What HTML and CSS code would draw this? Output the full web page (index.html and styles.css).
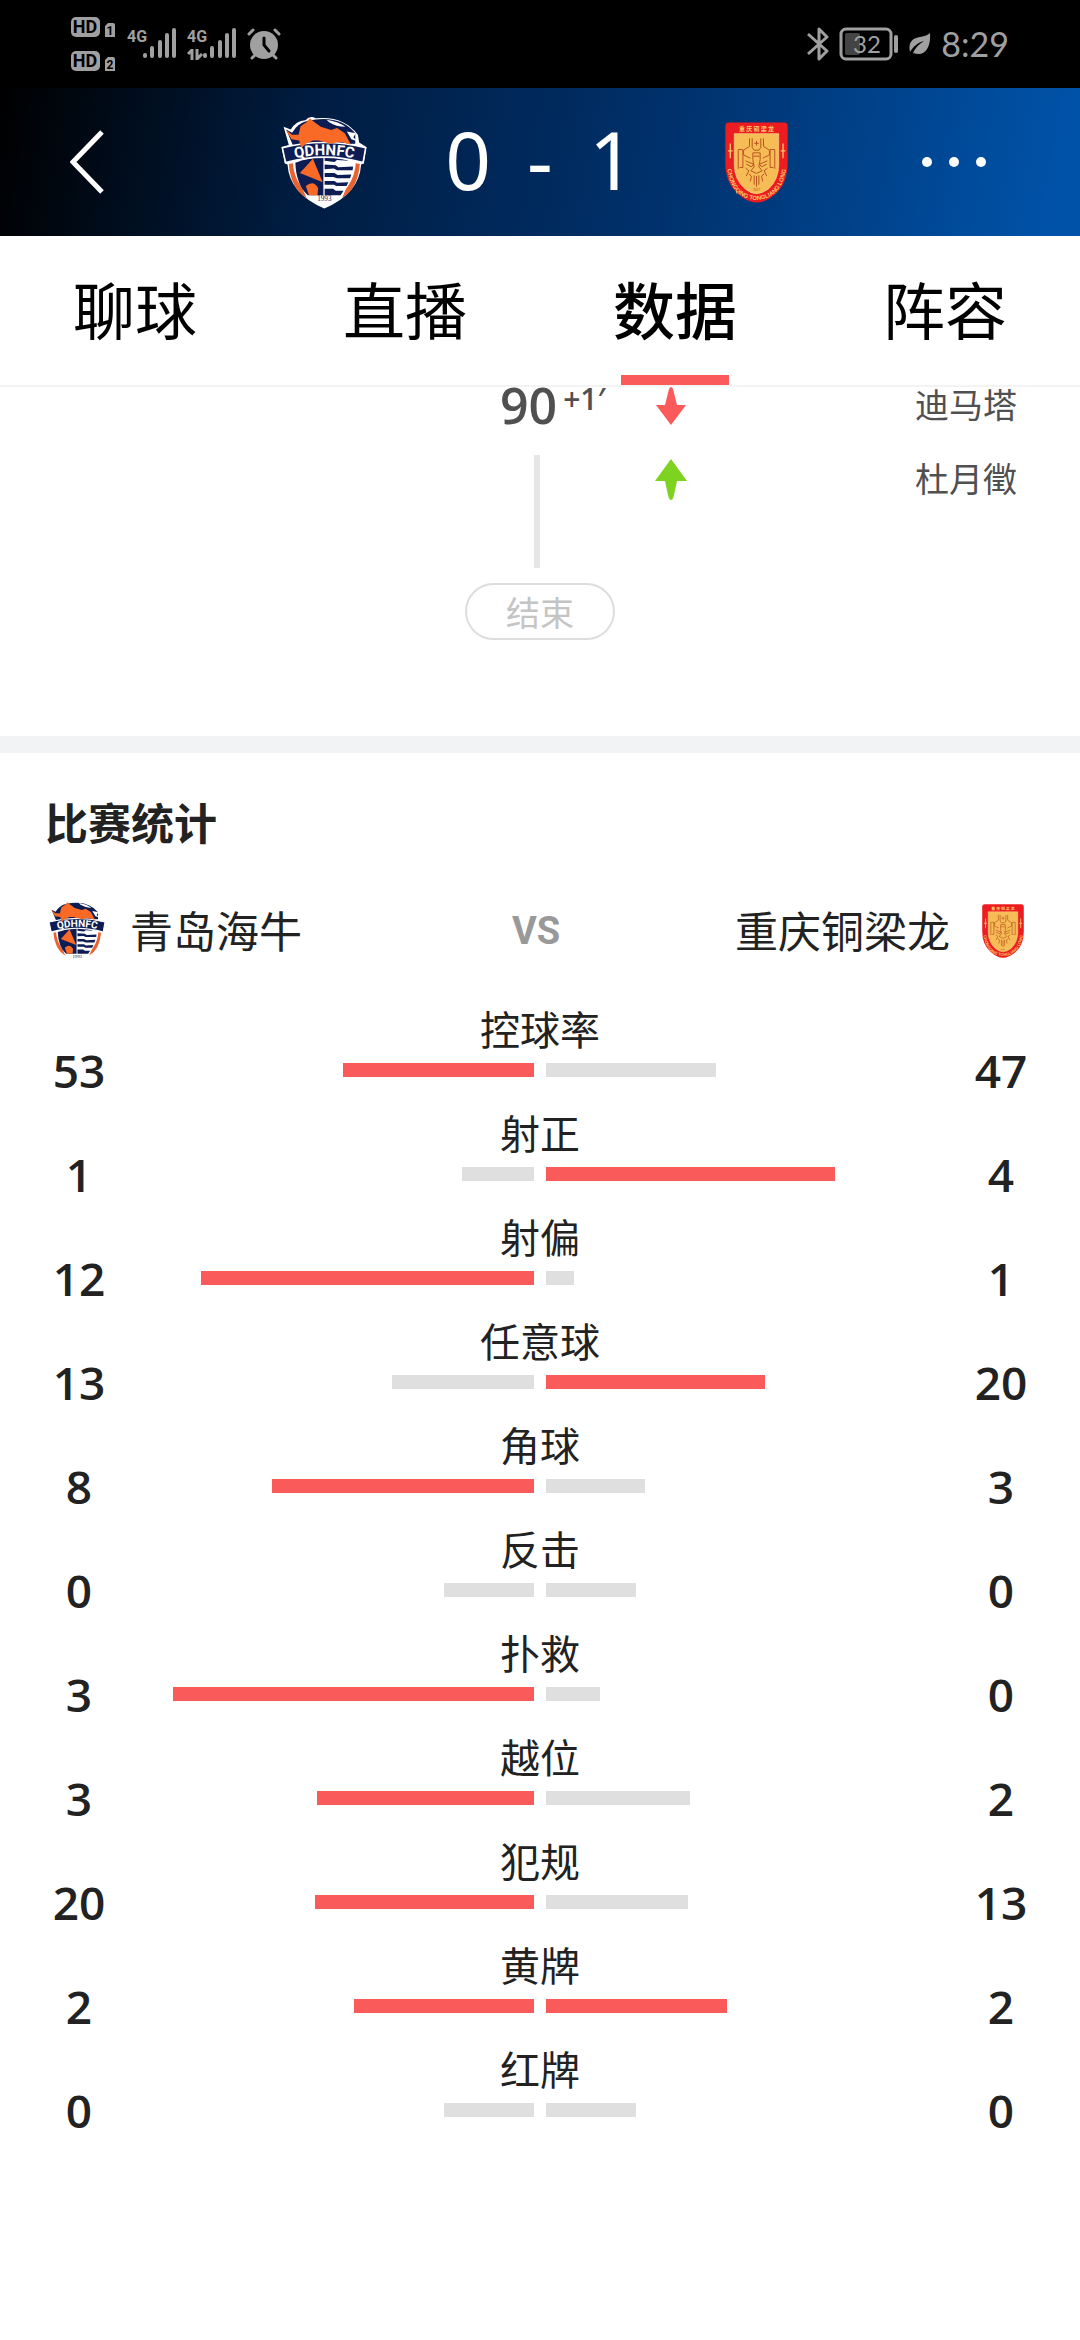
FILE: index.html
```html
<!DOCTYPE html>
<html lang="zh-CN">
<head>
    <meta charset="UTF-8">
    <meta name="viewport" content="width=device-width, initial-scale=1.0">
    <title>比赛数据</title>
    <link rel="stylesheet" href="styles.css">
</head>
<body>

<!-- club badges, reused below -->
<svg class="defs" aria-hidden="true">
    <symbol id="badge-qdhn" viewBox="60 44 264 288">
        <path d="M68 80 L90 88 Q106 62 135 60 Q150 44 166 54 Q250 44 296 104 L300 128 L322 142 L314 192 L306 196 Q300 286 193 331 Q86 286 80 196 L72 192 L62 142 L84 136 Z" fill="#fff"/>
        <path d="M76 88 L94 98 Q112 68 140 62 Q240 40 288 100 L288 132 L96 136 Z" fill="#0d1c52"/>
        <path d="M200 58 Q238 64 258 80 Q230 80 208 66 Z" fill="#fff"/>
        <path d="M262 94 L290 100 L282 112 L294 124 L276 118 Z" fill="#fff"/>
        <path d="M84 194 Q90 270 138 298 L118 250 L104 190 Z M302 194 Q296 270 248 298 L268 250 L282 190 Z" fill="#e8632f"/>
        <path d="M96 186 Q193 152 290 186 Q286 278 193 318 Q100 278 96 186 Z" fill="#fff"/>
        <path d="M104 190 Q150 174 190 172 V290 H142 Q106 256 104 190 Z" fill="#0d1c52"/>
        <path d="M194 172 Q240 174 268 184 L232 182 L224 188 L194 184 Z M194 196 L228 198 L236 204 L281 202 L280 213 H232 L222 208 L194 210 Z M194 222 L224 222 L234 228 L276 226 L272 238 H232 L220 234 H194 Z M194 246 L224 246 L232 252 L267 250 L261 262 H230 L222 258 H194 Z M194 270 L220 270 L228 276 L252 276 L243 290 H194 Z" fill="#0d1c52"/>
        <path d="M158 178 L188 250 L118 222 Z M136 262 Q160 242 174 268 L172 290 H146 Z" fill="#f96a26"/>
        <path d="M64 144 Q193 112 320 144 L312 190 Q193 156 74 190 Z" fill="#0d1c52" stroke="#fff" stroke-width="5"/>
        <path d="M74 88 L94 104 L114 104 L120 78 L138 66 L149 54 L160 64 L182 80 L214 90 L232 84 L256 100 L274 134 L240 126 L212 132 L176 122 L158 122 L136 132 L122 146 L116 122 L92 118 Z" fill="#f96a26"/>
        <path id="qdhn-arc" d="M76 183 Q193 151 310 183" fill="none"/>
        <text class="qdhn-name"><textPath href="#qdhn-arc" startOffset="50%">QDHNFC</textPath></text>
        <text class="qdhn-year" x="193" y="308">1993</text>
    </symbol>

    <symbol id="badge-cqtl" viewBox="78 77 190 244">
        <path d="M90 78 H256 Q267 78 267 90 V200 Q267 262 230 294 Q200 320 173 320 Q146 320 118 294 Q79 262 79 200 V90 Q79 78 90 78 Z" fill="#ec1c20"/>
        <path d="M106 112 H240 V205 Q240 250 210 278 Q190 293 173 293 Q156 293 138 278 Q106 250 106 205 Z" fill="#f6bd57" stroke="#f9d98a" stroke-width="2"/>
        <g fill="none" stroke="#b8541f" stroke-width="3">
            <path d="M152 126 V150 L134 162 V176 L154 186 M194 126 V150 L212 162 V176 L192 186"/>
            <path d="M160 126 V154 L166 162 H180 L186 154 V126 M173 134 V148 M166 141 H180"/>
            <path d="M118 160 H132 V214 H122 M118 160 V218 M228 160 H214 V214 H224 M228 160 V218"/>
            <path d="M140 194 L164 204 L158 212 L142 204 M206 194 L182 204 L188 212 L204 204"/>
            <path d="M162 170 H184 V190 L180 212 L190 224 L173 232 L156 224 L166 212 L162 190 Z M164 180 H182"/>
            <path d="M140 216 L150 224 L142 240 M206 216 L196 224 L204 240 M150 234 L158 240 L154 256 M196 234 L188 240 L192 256 M166 238 V266 M180 238 V266 M173 240 V272"/>
        </g>
        <path d="M94 142 V186 M87 164 H101 M253 142 V186 M246 164 H260" stroke="#f9c968" stroke-width="4"/>
        <path id="cqtl-arc" d="M85 222 Q100 310 173 312 Q246 310 262 222" fill="none"/>
        <text class="cqtl-ring"><textPath href="#cqtl-arc" startOffset="50%">CHONGQING TONGLIANG LONG</textPath></text>
        <text class="cqtl-name" x="173" y="105">重 庆 铜 梁 龙</text>
        <text class="cqtl-year" x="173" y="284">2017</text>
    </symbol>

    <symbol id="signal" viewBox="0 0 34 31">
        <path d="M2 27 V28 M9 20 V28 M17 14 V28 M24 7 V28 M31 2 V28" stroke="#a0a0a0" stroke-width="4" stroke-linecap="round"/>
    </symbol>
</svg>

<div class="status-bar">
    <div class="status-left">
        <svg class="hd" width="46" height="56" viewBox="0 0 46 56">
            <rect x="0" y="1" width="29" height="20" rx="5"/>
            <rect x="0" y="35" width="29" height="20" rx="5"/>
            <path d="M34 10 L37 7 H42 Q44 7 44 9 V21 H34 Z M34 44 L37 41 H42 Q44 41 44 43 V55 H34 Z"/>
            <text class="hd-text" x="14" y="17">HD</text>
            <text class="hd-text" x="14" y="51">HD</text>
            <text class="sim-text" x="39" y="19">1</text>
            <text class="sim-text" x="39" y="53">2</text>
        </svg>
        <div class="network">
            <span>4G</span>
            <svg width="34" height="31"><use href="#signal"/></svg>
        </div>
        <div class="network">
            <span>4G
                <svg class="updown" width="16" height="11" viewBox="0 0 16 11"><path d="M1 5 L5 1 V11 M10 0 V10 L15 5" fill="none" stroke="#a0a0a0" stroke-width="3"/></svg>
            </span>
            <svg width="34" height="31"><use href="#signal"/></svg>
        </div>
        <svg width="34" height="32" viewBox="0 0 34 32">
            <circle cx="17" cy="17" r="14" fill="#a0a0a0"/>
            <path d="M2 6 L6 2 M28 2 L32 6 M5 30 L9 26 M25 26 L29 30" stroke="#a0a0a0" stroke-width="3" stroke-linecap="round"/>
            <path d="M17 10 V17 L22 23" fill="none" stroke="#000" stroke-width="3" stroke-linecap="round"/>
        </svg>
    </div>
    <div class="status-right">
        <svg width="22" height="36" viewBox="0 0 22 36">
            <path d="M1 8 L20 25 L12 33 V3 L20 11 L1 28" fill="none" stroke="#a0a0a0" stroke-width="3" stroke-linejoin="round"/>
        </svg>
        <svg width="60" height="34" viewBox="0 0 60 34">
            <rect x="2" y="2" width="50" height="30" rx="5" fill="none" stroke="#a0a0a0" stroke-width="3"/>
            <rect x="6" y="6" width="15" height="22" rx="2" fill="#444"/>
            <rect x="55" y="8" width="4" height="18" rx="2" fill="#a0a0a0"/>
            <text class="battery-text" x="28" y="26">32</text>
        </svg>
        <svg width="22" height="24" viewBox="0 0 22 24">
            <path d="M21 1 C22 14 17 22 10 22 Q7 22 4 21 C6 16 10 12 15 9 C8 11 4 15 1 20 C-1 11 3 6 11 5 C16 4 19 3 21 1 Z" fill="#a0a0a0"/>
        </svg>
        <span class="clock">8:29</span>
    </div>
</div>

<header class="match-header">
    <button class="back" aria-label="返回">
        <svg width="34" height="64" viewBox="0 0 34 64"><path d="M32 2 L3 32 L32 62" fill="none" stroke="#fff" stroke-width="5"/></svg>
    </button>
    <svg width="86" height="94"><use href="#badge-qdhn"/></svg>
    <div class="score"><span>0</span><span>-</span><span>1</span></div>
    <svg width="63" height="81"><use href="#badge-cqtl"/></svg>
    <button class="more" aria-label="更多">
        <svg width="66" height="12" viewBox="0 0 66 12" fill="#fff"><circle cx="6" cy="6" r="5"/><circle cx="33" cy="6" r="5"/><circle cx="60" cy="6" r="5"/></svg>
    </button>
</header>

<nav class="tabs">
    <a href="#chat">聊球</a>
    <a href="#live">直播</a>
    <a href="#data" class="active" aria-current="page">数据</a>
    <a href="#lineup">阵容</a>
</nav>

<section class="timeline">
    <div class="timeline-row">
        <div class="axis">
            <div class="minute">90<sup>+1′</sup></div>
            <div class="axis-line"></div>
        </div>
        <div class="events">
            <div class="event">
                <svg width="34" height="42" viewBox="0 0 34 42"><path d="M17 2 Q19 2 20 8 L23 20 H32 L17 40 L2 20 H11 L14 8 Q15 2 17 2 Z" fill="#fa5a5a"/></svg>
                <span>迪马塔</span>
            </div>
            <div class="event">
                <svg width="34" height="42" viewBox="0 0 34 42"><path d="M17 0 L33 22 H23 L20 36 Q19 41 17 41 Q15 41 14 36 L11 22 H1 Z" fill="#7ed321"/></svg>
                <span>杜月徵</span>
            </div>
        </div>
    </div>
    <div class="finish">结束</div>
</section>

<section class="stats" id="data">
    <h2>比赛统计</h2>

    <div class="teams">
        <div class="team">
            <svg width="58" height="63"><use href="#badge-qdhn"/></svg>
            <span>青岛海牛</span>
        </div>
        <span class="vs">VS</span>
        <div class="team away">
            <span>重庆铜梁龙</span>
            <svg width="42" height="54"><use href="#badge-cqtl"/></svg>
        </div>
    </div>

    <ul class="stat-list">
        <li class="stat">
            <span class="value">53</span>
            <div class="compare">
                <span class="label">控球率</span>
                <div class="bars">
                    <div class="half home"><div class="bar lead" style="width: 53%"></div></div>
                    <div class="half"><div class="bar" style="width: 47%"></div></div>
                </div>
            </div>
            <span class="value">47</span>
        </li>
        <li class="stat">
            <span class="value">1</span>
            <div class="compare">
                <span class="label">射正</span>
                <div class="bars">
                    <div class="half home"><div class="bar" style="width: 20%"></div></div>
                    <div class="half"><div class="bar lead" style="width: 80%"></div></div>
                </div>
            </div>
            <span class="value">4</span>
        </li>
        <li class="stat">
            <span class="value">12</span>
            <div class="compare">
                <span class="label">射偏</span>
                <div class="bars">
                    <div class="half home"><div class="bar lead" style="width: 92.3%"></div></div>
                    <div class="half"><div class="bar" style="width: 7.7%"></div></div>
                </div>
            </div>
            <span class="value">1</span>
        </li>
        <li class="stat">
            <span class="value">13</span>
            <div class="compare">
                <span class="label">任意球</span>
                <div class="bars">
                    <div class="half home"><div class="bar" style="width: 39.4%"></div></div>
                    <div class="half"><div class="bar lead" style="width: 60.6%"></div></div>
                </div>
            </div>
            <span class="value">20</span>
        </li>
        <li class="stat">
            <span class="value">8</span>
            <div class="compare">
                <span class="label">角球</span>
                <div class="bars">
                    <div class="half home"><div class="bar lead" style="width: 72.7%"></div></div>
                    <div class="half"><div class="bar" style="width: 27.3%"></div></div>
                </div>
            </div>
            <span class="value">3</span>
        </li>
        <li class="stat">
            <span class="value">0</span>
            <div class="compare">
                <span class="label">反击</span>
                <div class="bars">
                    <div class="half home"><div class="bar" style="width: 25%"></div></div>
                    <div class="half"><div class="bar" style="width: 25%"></div></div>
                </div>
            </div>
            <span class="value">0</span>
        </li>
        <li class="stat">
            <span class="value">3</span>
            <div class="compare">
                <span class="label">扑救</span>
                <div class="bars">
                    <div class="half home"><div class="bar lead" style="width: 100%"></div></div>
                    <div class="half"><div class="bar" style="width: 15%"></div></div>
                </div>
            </div>
            <span class="value">0</span>
        </li>
        <li class="stat">
            <span class="value">3</span>
            <div class="compare">
                <span class="label">越位</span>
                <div class="bars">
                    <div class="half home"><div class="bar lead" style="width: 60%"></div></div>
                    <div class="half"><div class="bar" style="width: 40%"></div></div>
                </div>
            </div>
            <span class="value">2</span>
        </li>
        <li class="stat">
            <span class="value">20</span>
            <div class="compare">
                <span class="label">犯规</span>
                <div class="bars">
                    <div class="half home"><div class="bar lead" style="width: 60.6%"></div></div>
                    <div class="half"><div class="bar" style="width: 39.4%"></div></div>
                </div>
            </div>
            <span class="value">13</span>
        </li>
        <li class="stat">
            <span class="value">2</span>
            <div class="compare">
                <span class="label">黄牌</span>
                <div class="bars">
                    <div class="half home"><div class="bar lead" style="width: 50%"></div></div>
                    <div class="half"><div class="bar lead" style="width: 50%"></div></div>
                </div>
            </div>
            <span class="value">2</span>
        </li>
        <li class="stat">
            <span class="value">0</span>
            <div class="compare">
                <span class="label">红牌</span>
                <div class="bars">
                    <div class="half home"><div class="bar" style="width: 25%"></div></div>
                    <div class="half"><div class="bar" style="width: 25%"></div></div>
                </div>
            </div>
            <span class="value">0</span>
        </li>
    </ul>
</section>

</body>
</html>
```
FILE: styles.css
```css
* {
    box-sizing: border-box;
}
body {
    margin: 0;
    background-color: #fff;
    color: #222;
    font-family: "Noto Sans CJK SC", sans-serif;
}
svg {
    display: block;
    flex-shrink: 0;
}
button {
    padding: 0;
    border: none;
    background: none;
    cursor: pointer;
}
.defs {
    display: none;
}

/* badge lettering */
.qdhn-name {
    font: bold 46px Roboto, sans-serif;
    fill: #fff;
    text-anchor: middle;
}
.qdhn-year {
    font: 22px "Liberation Serif", serif;
    fill: #0d1c52;
    text-anchor: middle;
}
.cqtl-ring {
    font: bold 18px "Liberation Sans", sans-serif;
    fill: #f9c968;
    text-anchor: middle;
}
.cqtl-name {
    font: bold 18px "Noto Sans CJK SC", sans-serif;
    fill: #f9c968;
    text-anchor: middle;
}
.cqtl-year {
    font: 9px "Liberation Sans", sans-serif;
    fill: #a8451c;
    text-anchor: middle;
}

/* status bar */
.status-bar {
    display: flex;
    justify-content: space-between;
    align-items: center;
    height: 88px;
    padding: 0 71px;
    background-color: #000;
    color: #a0a0a0;
}
.status-left, .status-right {
    display: flex;
    align-items: center;
    gap: 10px;
}
.hd {
    fill: #a0a0a0;
}
.hd-text {
    font: bold 18px Roboto, sans-serif;
    fill: #000;
    text-anchor: middle;
}
.sim-text {
    font: bold 12px Roboto, sans-serif;
    fill: #000;
    text-anchor: middle;
}
.network {
    display: flex;
    height: 32px;
}
.network span {
    width: 16px;
    font: bold 16px/18px Roboto, sans-serif;
}
.updown {
    margin-top: 3px;
}
.battery-text {
    font: 24px Lato, sans-serif;
    fill: #a0a0a0;
    text-anchor: middle;
}
.clock {
    font: 34px/40px Lato, sans-serif;
}

/* header */
.match-header {
    display: grid;
    grid-template-columns: repeat(5, 1fr);
    align-items: center;
    justify-items: center;
    height: 148px;
    background: linear-gradient(100deg, #000 0%, #001c40 28%, #00306a 60%, #0052a8 97%);
}
.back {
    justify-self: start;
    margin-left: 70px;
}
.more {
    padding-right: 36px;
}
.score {
    display: flex;
    gap: 36px;
    padding-bottom: 6px;
    color: #fff;
    font: 80px/100px "Noto Sans", sans-serif;
}

/* tabs */
.tabs {
    display: grid;
    grid-template-columns: repeat(4, 1fr);
    height: 151px;
    border-bottom: 2px solid #f3f3f3;
}
.tabs a {
    position: relative;
    color: #000;
    font-size: 62px;
    line-height: 144px;
    text-align: center;
    text-decoration: none;
}
.tabs .active {
    font-weight: 500;
}
.tabs .active::after {
    content: "";
    position: absolute;
    left: 30%;
    right: 30%;
    bottom: 0;
    height: 10px;
    background-color: #fa5a5a;
}

/* timeline */
.timeline {
    padding-bottom: 96px;
    border-bottom: 17px solid #f2f3f5;
}
.timeline-row {
    display: grid;
    grid-template-columns: 1fr 80px 1fr;
}
.axis {
    grid-column: 2;
    padding-right: 6px;
}
.minute {
    height: 38px;
    color: #505050;
    font: 600 50px/36px "Open Sans", sans-serif;
    white-space: nowrap;
}
.minute sup {
    display: inline-block;
    margin-left: 6px;
    font-size: 30px;
    line-height: 24px;
    vertical-align: top;
}
.axis-line {
    width: 6px;
    height: 113px;
    margin: 30px auto 0;
    background-color: #e6e6e6;
}
.events {
    display: flex;
    flex-direction: column;
    gap: 36px;
    padding: 0 63px 0 74px;
}
.event {
    display: flex;
    justify-content: space-between;
    align-items: center;
    height: 38px;
    color: #505050;
    font-size: 34px;
}
.event span {
    padding-bottom: 6px;
}
.finish {
    width: 150px;
    margin: 15px auto 0;
    border: 2px solid #ddd;
    border-radius: 29px;
    color: #c4c4c4;
    font-size: 34px;
    line-height: 53px;
    text-align: center;
}

/* match statistics */
.stats h2 {
    margin: 0;
    padding: 38px 45px 0;
    font-size: 43px;
    line-height: 60px;
}
.teams {
    display: grid;
    grid-template-columns: 1fr auto 1fr;
    align-items: center;
    height: 64px;
    margin: 48px 56px 0 48px;
}
.team {
    display: flex;
    align-items: center;
    gap: 24px;
    font-size: 43px;
    line-height: 60px;
}
.team span {
    padding-bottom: 4px;
}
.away {
    justify-content: flex-end;
    gap: 32px;
}
.vs {
    color: #999;
    font: bold 38px/60px Roboto, sans-serif;
}
.stat-list {
    margin: 26px 0 0;
    padding: 0;
    list-style: none;
}
.stat {
    display: grid;
    grid-template-columns: 158px 1fr 158px;
    align-items: end;
    gap: 15px;
    height: 104px;
}
.value {
    font: 600 46px/46px "Open Sans", sans-serif;
    text-align: center;
}
.compare {
    padding-bottom: 16px;
}
.label {
    display: block;
    font-size: 40px;
    line-height: 54px;
    text-align: center;
}
.bars {
    display: grid;
    grid-template-columns: 1fr 1fr;
    gap: 12px;
    margin-top: 8px;
}
.half {
    display: flex;
}
.home {
    justify-content: flex-end;
}
.bar {
    height: 14px;
    background-color: #dfdfdf;
}
.lead {
    background-color: #fa5a5a;
}
```
